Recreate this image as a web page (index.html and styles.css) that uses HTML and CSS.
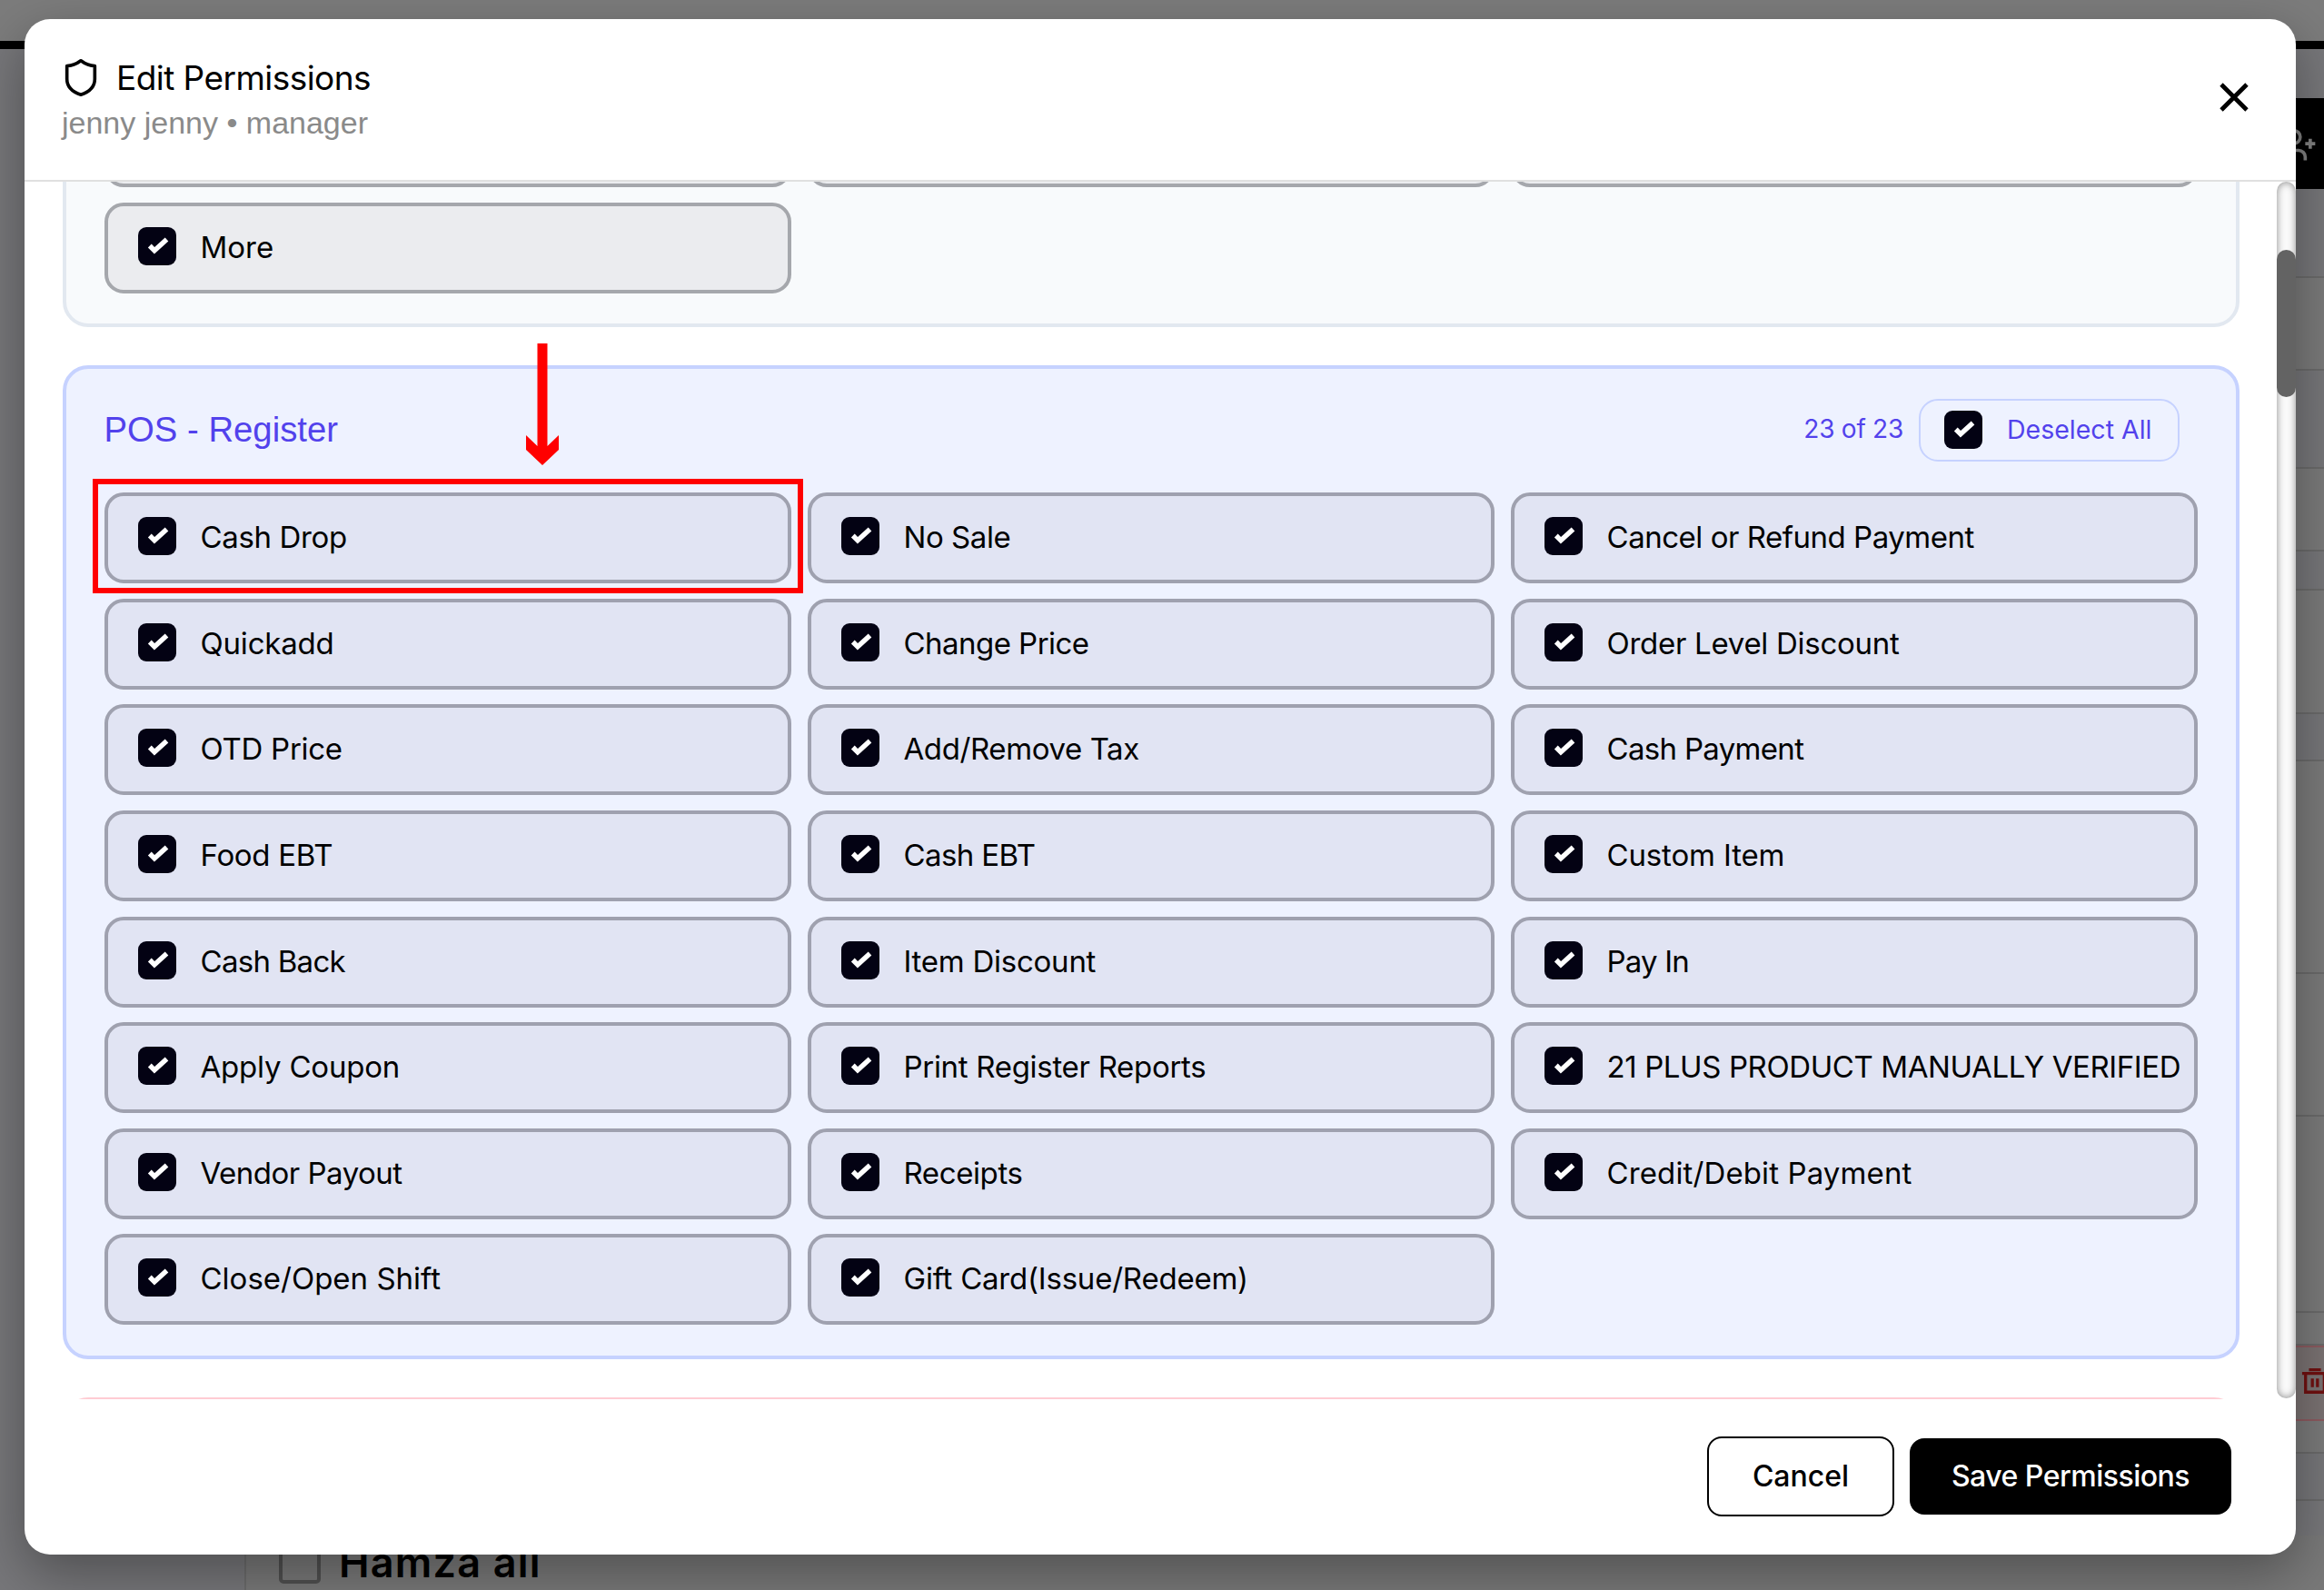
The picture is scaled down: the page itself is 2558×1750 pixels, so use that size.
FILE: index.html
```html
<!DOCTYPE html>
<html lang="en">
<head>
<meta charset="utf-8">
<title>Edit Permissions</title>
<link rel="stylesheet" href="styles.css">
</head>
<body>
<div class="backdrop">
  <div class="topline"></div>
  <div class="add-user">
    <svg width="44" height="44" viewBox="0 0 24 24" fill="none" stroke="#808080" stroke-width="2"><path d="M16 21v-2a4 4 0 0 0-4-4H6a4 4 0 0 0-4 4v2M19 8v6M22 11h-6"/><circle cx="9" cy="7" r="4"/></svg>
  </div>
  <div class="strips">
    <i class="h97 cool"></i><i class="h102"></i><i class="h108 cool"></i><i class="h91"></i><i class="h43 cool"></i><i class="h136"></i><i class="h52 cool"></i><i class="h234"></i><i class="h157"></i><i class="h216"></i><i class="h36"></i>
    <div class="delete"><svg width="30" height="30" viewBox="0 0 32 32" fill="none" stroke="#6f1010" stroke-width="3.500"><path d="M1 6h30M9 1.800h14M5 6v22h22V6M13 12v10M19 12v10"/></svg></div>
    <i class="h36"></i><i class="h52 cool"></i>
  </div>
  <div class="user-row"><span class="empty-check"></span><span class="user-name">Hamza ali</span></div>
</div>
<main class="modal">
  <header class="head">
    <div>
      <h1 class="title"><svg class="shield" width="46" height="46" viewBox="0 0 24 24" fill="none" stroke="#000" stroke-width="1.900" stroke-linejoin="round"><path d="M20 13c0 5-3.500 7.500-8 9-4.500-1.500-8-4-8-9V5.500c3.500 0 6-1.500 8-3C14 4 16.500 5.500 20 5.500z"/></svg><span>Edit Permissions</span></h1>
      <p class="subtitle">jenny jenny • manager</p>
    </div>
    <svg class="close" width="32" height="32" viewBox="0 0 32 32" stroke="#000" stroke-width="4.800"><path d="M2 2 30 30M30 2 2 30"/></svg>
  </header>
  <div class="body">
    <div class="sections">
      <section class="card slate">
        <div class="grid"><div class="item"></div><div class="item"></div><div class="item"></div>
        <div class="item"><b class="box"></b><span>More</span></div></div>
      </section>
      <section class="card indigo">
        <div class="card-head"><h2>POS - Register</h2><span class="count">23 of 23</span><div class="deselect"><b class="box"></b><span>Deselect All</span></div></div>
        <div class="grid" id="perms"></div>
        <div class="highlight"></div>
        <svg class="arrow" width="38" height="136" viewBox="0 0 38 136" fill="#f00"><path d="M13.500 0h11v113L37 101v16L19 134 1 117v-16l12.500 12z"/></svg>
      </section>
      <section class="card rose"></section>
    </div>
    <div class="scroll"><div class="thumb"></div></div>
  </div>
  <footer class="foot"><button class="cancel">Cancel</button><button class="save">Save Permissions</button></footer>
</main>
<script src="app.js"></script>
</body>
</html>
```
FILE: app.js
```js
// Each permission: label and its tracking in pixels.
const permissions = [
  ["Cash Drop", -0.36], ["No Sale", -0.45], ["Cancel or Refund Payment", -0.48],
  ["Quickadd", -0.2], ["Change Price", -0.54], ["Order Level Discount", -0.28],
  ["OTD Price", -0.27], ["Add/Remove Tax", -0.4], ["Cash Payment", -0.68],
  ["Food EBT", -0.3], ["Cash EBT", -0.6], ["Custom Item", -0.15],
  ["Cash Back", -0.72], ["Item Discount", -0.25], ["Pay In", -0.8],
  ["Apply Coupon", -0.2], ["Print Register Reports", -0.3], ["21 PLUS PRODUCT MANUALLY VERIFIED", -0.4],
  ["Vendor Payout", -0.5], ["Receipts", -0.4], ["Credit/Debit Payment", 0.12],
  ["Close/Open Shift", 0], ["Gift Card(Issue/Redeem)", -0.22]
];
document.getElementById("perms").innerHTML = permissions.map(([n, t]) => `<div class="item"><b class="box"></b><span style="letter-spacing:${t}px">${n}</span></div>`).join("");
document.querySelectorAll(".box").forEach(b => {
  b.innerHTML = '<svg width="42" height="42" viewBox="0 0 42 42" fill="none" stroke="#fff" stroke-width="5.400"><path d="M12.800 20.500 18 25.800 31.500 13.500"/></svg>';
});
```
FILE: styles.css
```css
*{box-sizing:border-box}
body{margin:0;width:2558px;height:1750px;overflow:hidden;position:relative;background:#7c7c7c;font-family:Inter,sans-serif;color:#000}
h1,h2,p{margin:0;font-weight:400}
svg{display:block}
.backdrop{position:absolute;inset:0;background:#77777a}
.topline{height:54px;background:#7c7c7c;border-bottom:9px solid #000}
.add-user{position:absolute;top:108px;right:0;width:200px;height:100px;background:#000}
.add-user svg{position:absolute;right:6px;top:30px}
.strips{position:absolute;left:2500px;right:0;top:208px;display:flex;flex-direction:column}
.strips i{display:block;border-bottom:2px solid #6a6a6a;background:#7a7a7a}
.strips .cool{background:#767679}
.h97{height:98px}.h102{height:102px}.h108{height:108px}.h91{height:91px}.h43{height:43px}.h136{height:136px}.h52{height:52px}.h234{height:234px}.h157{height:157px}.h216{height:216px}.h36{height:36px}
.delete{height:83px;border:solid #8c5a5f;border-width:2px 0;background:#7a7272;padding:23px 0 0 33px}
.user-row{position:absolute;left:269px;right:0;bottom:0;height:60px;border-left:2px solid #6c6c6c;background:#797979;display:flex;align-items:flex-start;padding-left:36px;gap:20px}
.empty-check{width:46px;height:53px;border:4px solid #505050;border-radius:5px}
.user-name{font-size:45px;font-weight:600;line-height:60px;letter-spacing:1.2px}
.modal{position:absolute;left:27px;top:21px;width:2500px;height:1690px;border-radius:28px;background:#fff;box-shadow:0 20px 60px rgba(0,0,0,.34);display:flex;flex-direction:column;overflow:hidden}
.head{height:179px;flex:none;border-bottom:2px solid #e0e0e0;padding:39px 52px 0 39px;display:flex;justify-content:space-between}
.title{display:flex;align-items:center;gap:16px;height:50px;font-size:37px;letter-spacing:-.55px}
.subtitle{font:34px/50px "Liberation Sans",sans-serif;color:#8a8a8a;padding-left:2px}
.close{margin-top:31px}
.body{height:1340px;flex:none;display:flex;justify-content:space-between;overflow:hidden}
.sections{width:2396px;margin-left:42px;margin-top:-98px;display:flex;flex-direction:column;gap:42px}
.card{position:relative;border:4px solid;border-radius:28px;flex:none;padding:0 42px 0 41.500px}
.slate{height:258px;border-color:#e2e8f0;background:#f8fafc}
.grid{display:grid;grid-template-columns:repeat(3,1fr);grid-auto-rows:100px;gap:16.650px 17.500px}
.item{border:4px solid #a5a7ac;border-radius:21px;background:#ebecef;display:flex;align-items:center;padding-left:33px;gap:27px;font-size:33px;white-space:nowrap}
.item span{position:relative;top:-1px}
.box{width:42px;height:42px;border-radius:9px;background:#030213;flex:none}
.item .box{margin-bottom:4px}
.indigo{height:1094px;border-color:#c6d2ff;background:#eef2ff}
.indigo .item{border-color:#9fa1af;background:#e1e4f3}
.card-head{height:136px;display:flex;align-items:center;padding:0 20px 2px 0;color:#5242ec}
.card-head h2{font:38.300px "Liberation Sans",sans-serif;margin-right:auto}
.card-head span{position:relative;top:-1px}
.count{font-size:28px;margin-right:17px;letter-spacing:-.25px}
.deselect{display:flex;align-items:center;gap:27px;width:287px;height:69px;border:2px solid #c6d2ff;border-radius:21px;padding-left:26px;font-size:28.500px;white-space:nowrap}
.highlight{position:absolute;left:29px;top:121px;width:782px;height:126px;border:6px solid #f00}
.arrow{position:absolute;left:505px;top:-28px}
.rose{height:120px;border-color:#ffccd3;background:#fff1f2}
.scroll{width:21px;height:1339px;border-radius:11px;background:#fafafa;box-shadow:inset 0 0 9px rgba(0,0,0,.45)}
.thumb{margin-top:75px;height:162px;border-radius:11px;background:#636363}
.foot{flex:1;display:flex;justify-content:flex-end;padding:41px 71px 0 0;gap:17px}
.foot button{font:500 32px Inter,sans-serif;border-radius:16px;padding:0 0 2px}
.cancel{width:206px;height:88px;border:2px solid #000;background:#fff;color:#000}
.foot .save{width:354px;height:84px;margin-top:2px;border:0;background:#000;color:#fff;letter-spacing:-.5px}
```
